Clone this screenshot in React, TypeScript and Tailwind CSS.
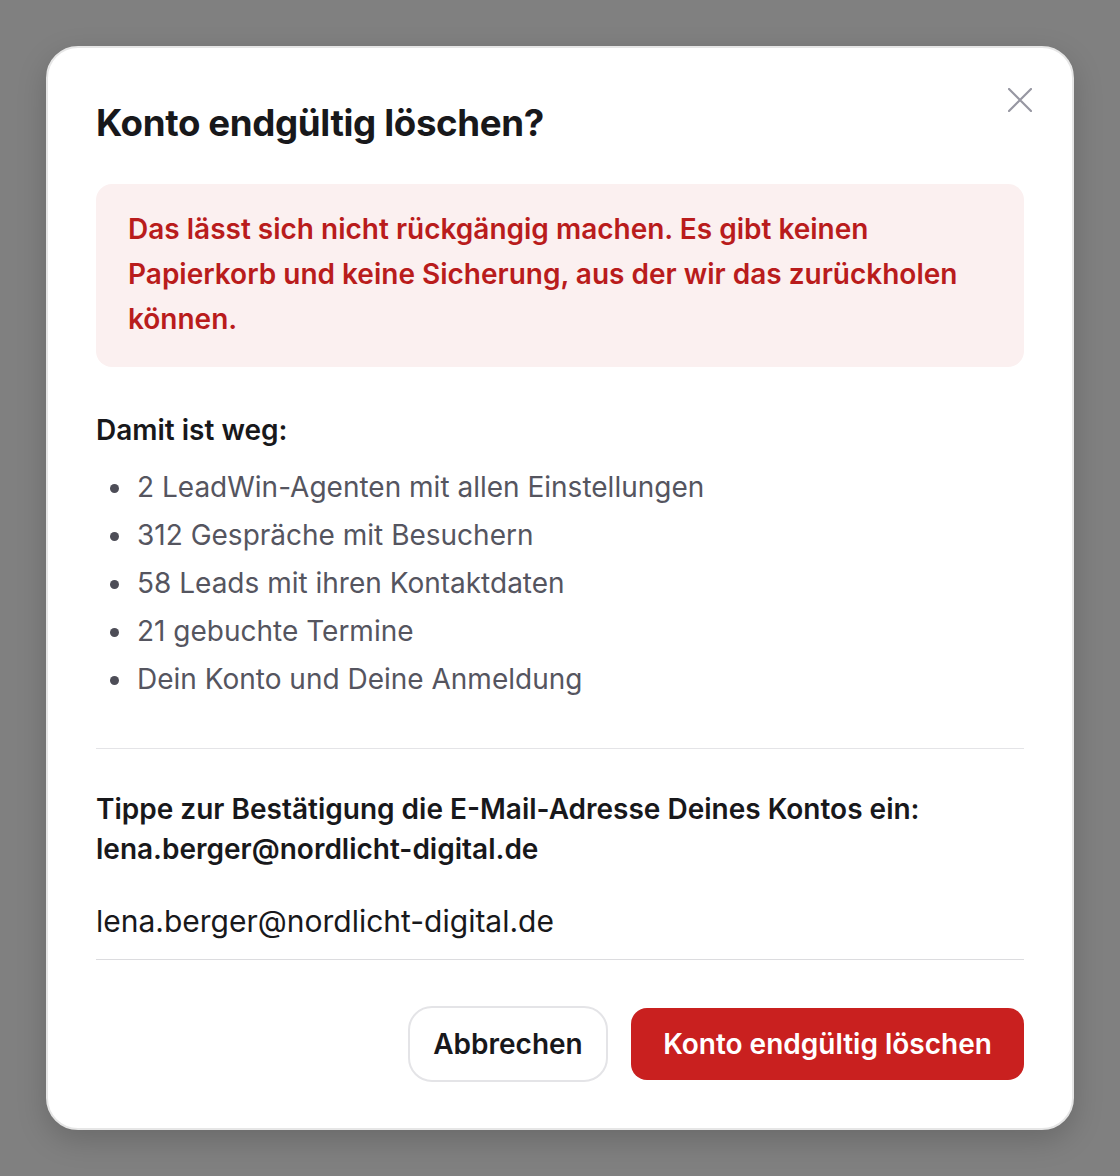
import React from "react";

const items = [
  "2 LeadWin-Agenten mit allen Einstellungen",
  "312 Gespräche mit Besuchern",
  "58 Leads mit ihren Kontaktdaten",
  "21 gebuchte Termine",
  "Dein Konto und Deine Anmeldung",
];

export default function App() {
  return (
    <div
      className="h-[1176px] w-full bg-[#808080] flex items-center justify-center"
      style={{ fontFamily: "Inter, 'Noto Sans', sans-serif" }}
    >
      <div className="relative w-[1028px] rounded-[32px] border-2 border-[#e6e6e6] bg-white px-[48px] pt-[53px] pb-[46px] shadow-[0_10px_30px_rgba(0,0,0,0.18)]">
        <button
          type="button"
          aria-label="Schließen"
          className="absolute right-[40px] top-[40px] flex h-[24px] w-[24px] items-center justify-center"
        >
          <svg width="24" height="24" viewBox="0 0 24 24" fill="none">
            <path d="M1 1L23 23M23 1L1 23" stroke="#9797a2" strokeWidth="2.2" strokeLinecap="round" />
          </svg>
        </button>

        <h2 className="text-[36.7px] font-bold leading-[44px] tracking-[-0.01em] text-[#18181b]">
          Konto endgültig löschen?
        </h2>

        <div className="mt-[39px] rounded-[16px] bg-[#fbf0f0] px-[32px] pt-[23px] pb-[25px]">
          <p className="text-[28px] font-semibold leading-[45px] text-[#b91c1c]">
            Das lässt sich nicht rückgängig machen. Es gibt keinen Papierkorb und keine Sicherung, aus der wir das zurückholen können.
          </p>
        </div>

        <p className="mt-[45px] text-[28px] font-semibold leading-[36px] text-[#18181b]">Damit ist weg:</p>

        <ul className="mt-[15px] text-[28px] leading-[48px] text-[#55555f]">
          {items.map((t) => (
            <li key={t} className="flex items-center">
              <span className="ml-[14px] mr-[18px] mt-[2px] h-[9px] w-[9px] shrink-0 rounded-full bg-[#4d4d57]" />
              <span>{t}</span>
            </li>
          ))}
        </ul>

        <div className="mt-[45px] h-px w-full bg-[#e4e4e7]" />

        <p className="mt-[40px] text-[28px] font-semibold leading-[40px] text-[#18181b]">
          Tippe zur Bestätigung die E-Mail-Adresse Deines Kontos ein:
          <br />
          lena.berger@nordlicht-digital.de
        </p>

        <input
          type="text"
          defaultValue="lena.berger@nordlicht-digital.de"
          className="mt-[12px] block w-full border-b border-[#dcdcdf] bg-transparent pt-[20px] pb-[18px] text-[30px] leading-[40px] text-[#18181b] outline-none"
        />

        <div className="mt-[46px] flex items-center justify-end gap-[23px]">
          <button
            type="button"
            className="h-[76px] w-[200px] rounded-[24px] border-2 border-[#e4e4e7] bg-white text-[28px] font-semibold text-[#18181b]"
          >
            Abbrechen
          </button>
          <button
            type="button"
            className="h-[72px] w-[393px] rounded-[16px] bg-[#c9201f] text-[28px] font-semibold text-white"
          >
            Konto endgültig löschen
          </button>
        </div>
      </div>
    </div>
  );
}
